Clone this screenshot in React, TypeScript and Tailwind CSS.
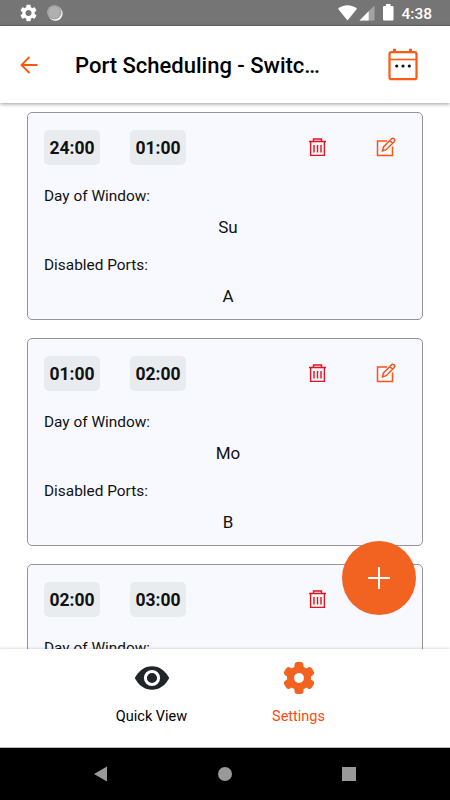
type PortWindow = { start: string; end: string; day?: string; ports?: string };

const windows: PortWindow[] = [
  { start: '24:00', end: '01:00', day: 'Su', ports: 'A' },
  { start: '01:00', end: '02:00', day: 'Mo', ports: 'B' },
  { start: '02:00', end: '03:00' },
];

const GEAR =
  'M19.14 12.94c.04-.3.06-.61.06-.94 0-.32-.02-.64-.07-.94l2.03-1.58c.18-.14.23-.41.12-.61l-1.92-3.32c-.12-.22-.37-.29-.59-.22l-2.39.96c-.5-.38-1.03-.7-1.62-.94l-.36-2.54c-.04-.24-.24-.41-.48-.41h-3.84c-.24 0-.43.17-.47.41l-.36 2.54c-.59.24-1.13.57-1.62.94l-2.39-.96c-.22-.08-.47 0-.59.22L2.74 8.87c-.12.21-.08.47.12.61l2.03 1.58c-.05.3-.09.63-.09.94s.02.64.07.94l-2.03 1.58c-.18.14-.23.41-.12.61l1.92 3.32c.12.22.37.29.59.22l2.39-.96c.5.38 1.03.7 1.62.94l.36 2.54c.05.24.24.41.48.41h3.84c.24 0 .44-.17.47-.41l.36-2.54c.59-.24 1.13-.56 1.62-.94l2.39.96c.22.08.47 0 .59-.22l1.92-3.32c.12-.22.07-.47-.12-.61l-2.01-1.58zM12 15.6c-1.98 0-3.6-1.62-3.6-3.6s1.62-3.6 3.6-3.6 3.6 1.62 3.6 3.6-1.62 3.6-3.6 3.6z';

export default function App() {
  return (
    <main className="flex h-[800px] w-[450px] flex-col overflow-hidden bg-white font-['Roboto',sans-serif] text-[#111]">
      <StatusBar />
      <Header />

      <section className="relative min-h-0 flex-1 overflow-hidden">
        <div className="flex flex-col gap-[18px] px-[27px] pt-[9px]">
          {windows.map((w) => (
            <WindowCard key={w.start} {...w} />
          ))}
        </div>
        <button
          aria-label="Add window"
          className="absolute right-[34px] bottom-[34px] flex h-[74px] w-[74px] items-center justify-center rounded-full bg-[#f26322]"
        >
          <svg width="22" height="22" viewBox="0 0 22 22" stroke="#fff" strokeWidth="2">
            <path d="M11 0v22M0 11h22" />
          </svg>
        </button>
      </section>

      <BottomNav />
      <SystemNav />
    </main>
  );
}

function StatusBar() {
  return (
    <div className="flex h-[26px] shrink-0 items-center justify-between border-b border-[#676767] bg-[#757575] pr-[18px] pl-5">
      <div className="flex items-center gap-[10px]">
        <svg width="17" height="18" viewBox="2 2 20 20" fill="#fff">
          <path d={GEAR} />
        </svg>
        <svg width="16" height="16" viewBox="0 0 16 16">
          <circle cx="8.4" cy="8.6" r="7.2" fill="#fff" />
          <circle cx="7.4" cy="7.4" r="7.2" fill="#b0b0b0" />
          <circle cx="7.4" cy="7.4" r="6.2" fill="none" stroke="#949494" strokeWidth="1" strokeDasharray="1.5 1" />
        </svg>
      </div>
      <div className="flex items-center">
        <svg width="19" height="16" viewBox="0 0 19 16" fill="#fff">
          <path d="M0 3.8C2.6 1.5 5.9.3 9.5.3S16.4 1.5 19 3.8L9.5 15.5z" />
        </svg>
        <svg className="ml-[2px]" width="16" height="16" viewBox="0 0 16 16">
          <path d="M15.5 .5V15.5H.5z" fill="#a3a3a3" />
          <path d="M9.700 6.300V15.500H.5z" fill="#fff" />
        </svg>
        <svg className="ml-[8px]" width="11" height="17" viewBox="0 0 11 17" fill="#fff">
          <path d="M3 0h4.500v2H9.500q1 0 1 1v12.500q0 1-1 1h-8.500q-1 0-1-1V3q0-1 1-1h2z" />
        </svg>
        <span className="ml-[7px] pt-[2px] text-[15.5px] leading-4 font-medium text-white">4:38</span>
      </div>
    </div>
  );
}

function Header() {
  return (
    <header className="z-10 flex h-[77px] shrink-0 items-center bg-white pr-8 pl-5 shadow-[0_1px_4px_rgba(0,0,0,0.4)]">
      <svg width="18" height="18" viewBox="0 0 18 18" fill="none" stroke="#f9560c" strokeWidth="1.8">
        <path d="M9.500 1L1.500 9l8 8M1.500 9H17.500" />
      </svg>
      <h1 className="ml-[37px] flex-1 pt-[3px] text-[22px] leading-6 font-medium whitespace-nowrap text-black">
        Port Scheduling - Switc…
      </h1>
      <svg width="30" height="34" viewBox="0 0 30 34" fill="none" stroke="#fb5b12" strokeWidth="2.2">
        <rect x="1.500" y="4.200" width="27" height="27" rx="2" />
        <path d="M2 11.500h26" strokeWidth="1.6" />
        <path d="M6.500 .8v4M22.500 .8v4" strokeWidth="3" />
        <g fill="#111" stroke="none">
          <circle cx="8.700" cy="18" r="1.600" />
          <circle cx="15" cy="18" r="1.600" />
          <circle cx="21.300" cy="18" r="1.600" />
        </g>
      </svg>
    </header>
  );
}

function WindowCard({ start, end, day, ports }: PortWindow) {
  return (
    <article className="h-[208px] shrink-0 rounded-[5px] border border-[#94949a] bg-[#f8f9fe] px-4 pt-[17px]">
      <div className="flex h-[35px] items-center">
        <TimeChip time={start} />
        <TimeChip time={end} className="ml-[30px]" />
        <svg className="mb-[2px] ml-[122px]" width="19" height="20" viewBox="0 0 19 20" fill="none" stroke="#e3121b" strokeWidth="1.4">
          <path d="M1 4.500h17M5.500 4.200V2h8v2.200M2.600 4.800V18.400h13.800V4.800M6 8v7.500M9.500 8v7.500M13 8v7.500" />
        </svg>
        <svg className="mb-[2px] ml-[49px]" width="20" height="20" viewBox="0 0 20 20" fill="none" stroke="#f7561a" strokeWidth="1.5">
          <path d="M11 4H1.500V18.500H16.500V9.500" />
          <path d="M6.500 13.800l1-3.800L15.600 1.700q1.200-1 2.500.2t.2 2.600L10.200 12.700zM13.800 3.500l2.700 2.700" />
        </svg>
      </div>
      <Field label="Day of Window:" value={day} />
      {ports && <Field label="Disabled Ports:" value={ports} />}
    </article>
  );
}

function TimeChip({ time, className = '' }: { time: string; className?: string }) {
  return (
    <span
      className={`flex h-[35px] w-14 items-center justify-center rounded-[5px] bg-[#e9ecef] pt-[2px] text-[17.5px] font-bold ${className}`}
    >
      {time}
    </span>
  );
}

function Field({ label, value }: { label: string; value?: string }) {
  return (
    <div className="h-[69px] pt-[21px]">
      <p className="text-[15.4px] leading-5">{label}</p>
      {value && <p className="mt-[11px] pl-[6px] text-center text-[17px] leading-5">{value}</p>}
    </div>
  );
}

function BottomNav() {
  return (
    <nav className="z-10 flex h-[99px] shrink-0 justify-center border-b border-[#bbb] bg-white pt-[13px] shadow-[0_-1px_2px_rgba(0,0,0,0.12)]">
      <div className="flex w-[147px] flex-col items-center">
        <svg width="36" height="32" viewBox="0 0 36 32">
          <path
            d="M.8 16C4.500 8.800 10.500 4.200 18 4.200S31.500 8.800 35.200 16C31.500 23.200 25.500 27.800 18 27.800S4.500 23.200.8 16z"
            fill="#212529"
          />
          <circle cx="18" cy="16" r="6.600" fill="#212529" stroke="#fff" strokeWidth="3" />
        </svg>
        <span className="mt-[13px] text-[14.5px] leading-5 text-black">Quick View</span>
      </div>
      <div className="flex w-[147px] flex-col items-center">
        <svg width="32" height="32" viewBox="0 0 32 32" fill="#f26322">
          <circle cx="16" cy="16" r="12" />
          <rect x="11.500" y="0" width="9" height="32" rx="3" />
          <rect x="11.500" y="0" width="9" height="32" rx="3" transform="rotate(60 16 16)" />
          <rect x="11.500" y="0" width="9" height="32" rx="3" transform="rotate(120 16 16)" />
          <circle cx="16" cy="16" r="5" fill="#fff" />
        </svg>
        <span className="mt-[13px] text-[14.5px] leading-5 text-[#fa4b12]">Settings</span>
      </div>
    </nav>
  );
}

function SystemNav() {
  return (
    <div className="flex h-[52px] shrink-0 items-center justify-between bg-black px-[94px]">
      <svg width="13" height="16" viewBox="0 0 13 16" fill="#999">
        <path d="M13 .5v15L0 8z" />
      </svg>
      <span className="h-[14px] w-[14px] rounded-full bg-[#999]" />
      <span className="h-[14px] w-[14px] bg-[#999]" />
    </div>
  );
}
